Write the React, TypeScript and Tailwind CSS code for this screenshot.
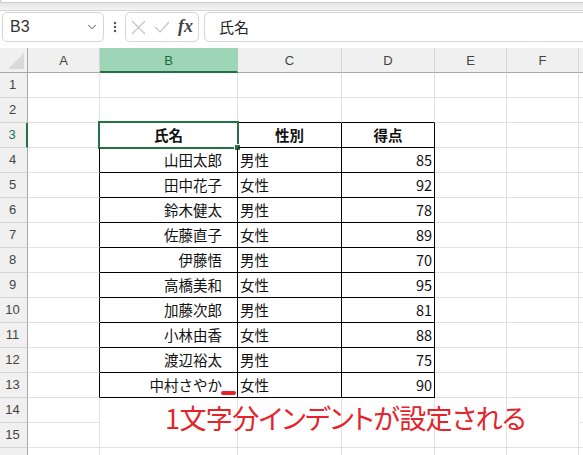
import { ChevronDown, EllipsisVertical } from "lucide-react";

const COLS = ["A", "B", "C", "D", "E", "F", "G"];
const WIDTHS = ["w-[72px]", "w-[138px]", "w-[104px]", "w-[93px]", "w-[72px]", "w-[72px]", "w-[40px]"];

const PEOPLE = [
  ["山田太郎", "男性", "85"],
  ["田中花子", "女性", "92"],
  ["鈴木健太", "男性", "78"],
  ["佐藤直子", "女性", "89"],
  ["伊藤悟", "男性", "70"],
  ["高橋美和", "女性", "95"],
  ["加藤次郎", "男性", "81"],
  ["小林由香", "女性", "88"],
  ["渡辺裕太", "男性", "75"],
  ["中村さやか", "女性", "90"],
];

// table occupies rows 3..13, columns B..D (index 1..3)
const inTableRow = (r: number) => r >= 3 && r <= 13;

function cellBorder(r: number, c: number) {
  const right = inTableRow(r) && c >= 0 && c <= 3 ? "border-r-black" : "border-r-[#e1e1e1]";
  let bottom = (r >= 2 && r <= 13 && c >= 1 && c <= 3) ? "border-b-black" : "border-b-[#e1e1e1]";
  // the note text sits over the row 14 / 15 line
  if (r === 14 && c >= 1 && c <= 5) bottom = "border-b-transparent";
  return `${right} ${bottom}`;
}

function cellContent(r: number, c: number) {
  if (r === 3) {
    const head = ["", "氏名", "性別", "得点"][c];
    if (!head) return null;
    return <span className="w-full text-center font-bold">{head}</span>;
  }
  if (r >= 4 && r <= 13) {
    const p = PEOPLE[r - 4];
    if (c === 1) return <span className="w-full text-right pr-[15px]">{p[0]}</span>;
    if (c === 2) return <span className="w-full text-left pl-[2px]">{p[1]}</span>;
    if (c === 3) return <span className="w-full text-right pr-[2px]">{p[2]}</span>;
  }
  return null;
}

function Sheet() {
  const rows = Array.from({ length: 16 }, (_, i) => i + 1);
  return (
    <div className="flex flex-col">
      {/* column headers */}
      <div className="flex h-[25px] bg-[#f0f0f0] font-['Liberation_Sans',sans-serif] text-[13px] text-[#444]">
        <div className="w-[28px] shrink-0 border-r border-r-[#a8a8a8] border-b border-b-[#a8a8a8] flex items-end justify-end pr-[3px] pb-[3px]">
          <svg width="16" height="16" viewBox="0 0 16 16">
            <polygon points="16,0 16,16 0,16" fill="#d9d9d9" />
          </svg>
        </div>
        {COLS.map((col, i) =>
          col === "B" ? (
            <div key={col} className={`${WIDTHS[i]} shrink-0 bg-[#9fd5b7] text-[#1d6b3b] border-r border-r-[#9fd5b7] border-b-2 border-b-[#217346] flex items-center justify-center pt-[2px]`}>
              {col}
            </div>
          ) : (
            <div key={col} className={`${WIDTHS[i]} shrink-0 border-r border-r-[#d4d4d4] border-b border-b-[#a8a8a8] flex items-center justify-center pt-[1px]`}>
              {col}
            </div>
          )
        )}
      </div>

      {rows.map((r) => (
        <div key={r} className="flex h-[25px]">
          <div
            className={`w-[28px] shrink-0 bg-[#f0f0f0] border-b border-b-[#d4d4d4] flex items-center justify-center pr-[2px] font-['Liberation_Sans',sans-serif] text-[13px] ${
              r === 3 ? "text-[#217346] border-r-2 border-r-[#217346]" : "text-[#444] border-r border-r-[#a8a8a8]"
            }`}
          >
            {r}
          </div>
          {COLS.map((col, c) => (
            <div
              key={col}
              className={`${WIDTHS[c]} shrink-0 relative border-r border-b ${cellBorder(r, c)} flex items-center text-[14.5px] text-[#111] font-['Noto_Sans_CJK_JP',sans-serif] leading-none pt-[1px]`}
            >
              {cellContent(r, c)}
              {r === 3 && c === 1 && (
                <div className="absolute -top-[2px] -left-[2px] -right-[2px] -bottom-[2px] border-2 border-[#217346]">
                  <div className="absolute -right-[4px] -bottom-[4px] w-[7px] h-[7px] bg-[#217346] border border-white" />
                </div>
              )}
              {r === 13 && c === 1 && (
                <div className="absolute left-[121px] top-[18px] w-[15px] h-[4px] rounded-full bg-[#e8212b]" />
              )}
            </div>
          ))}
        </div>
      ))}
    </div>
  );
}

export default function App() {
  return (
    <div className="w-[583px] h-[455px] overflow-hidden bg-white relative">
      {/* top ribbon edge */}
      <div className="h-[11px] bg-gradient-to-b from-[#dedede] to-[#f4f4f4] border-b border-[#d6d6d6]">
        <div className="h-[3px] bg-white rounded-bl-lg border-l border-b border-[#cfcfcf]" />
      </div>

      {/* formula bar */}
      <div className="flex items-stretch h-[30px] mt-[1px] pl-[2px]">
        <div className="w-[102px] shrink-0 rounded-[5px] border border-[#d6d6d6] bg-white flex items-center justify-between pl-[7px] pr-[4px] font-['Liberation_Sans',sans-serif] text-[16px] text-[#333]">
          <span>B3</span>
          <ChevronDown size={14} strokeWidth={1.6} color="#444" />
        </div>
        <div className="w-[20px] shrink-0 flex items-center justify-center ml-[1px]">
          <EllipsisVertical size={14} strokeWidth={2.2} color="#555" />
        </div>
        <div className="w-[74px] shrink-0 rounded-[5px] border border-[#d6d6d6] bg-white flex items-center pl-[5px] gap-[8px]">
          <svg width="15" height="15" viewBox="0 0 15 15">
            <path d="M1 1 L14 14 M14 1 L1 14" stroke="#c4c4c4" strokeWidth="1.2" fill="none" />
          </svg>
          <svg width="16" height="14" viewBox="0 0 16 14">
            <path d="M1 7 L6 12 L15 2" stroke="#c4c4c4" strokeWidth="1.2" fill="none" />
          </svg>
          <span className="font-['Liberation_Serif',serif] italic font-bold text-[18px] text-[#444] leading-none -mt-[2px]">fx</span>
        </div>
        <div className="flex-1 ml-[5px] -mr-[10px] rounded-[5px] border border-[#d6d6d6] bg-white flex items-center pl-[14px] font-['Noto_Sans_CJK_JP',sans-serif] text-[15px] text-[#222]">
          氏名
        </div>
      </div>

      <div className="h-[6px]" />

      <Sheet />

      {/* annotation */}
      <div className="absolute left-[165px] top-[404px] whitespace-nowrap font-['Noto_Sans_CJK_JP',sans-serif] text-[27px] leading-none tracking-[-0.6px] text-[#e5232c] [font-feature-settings:'palt']">
        1文字分インデントが設定される
      </div>
    </div>
  );
}
